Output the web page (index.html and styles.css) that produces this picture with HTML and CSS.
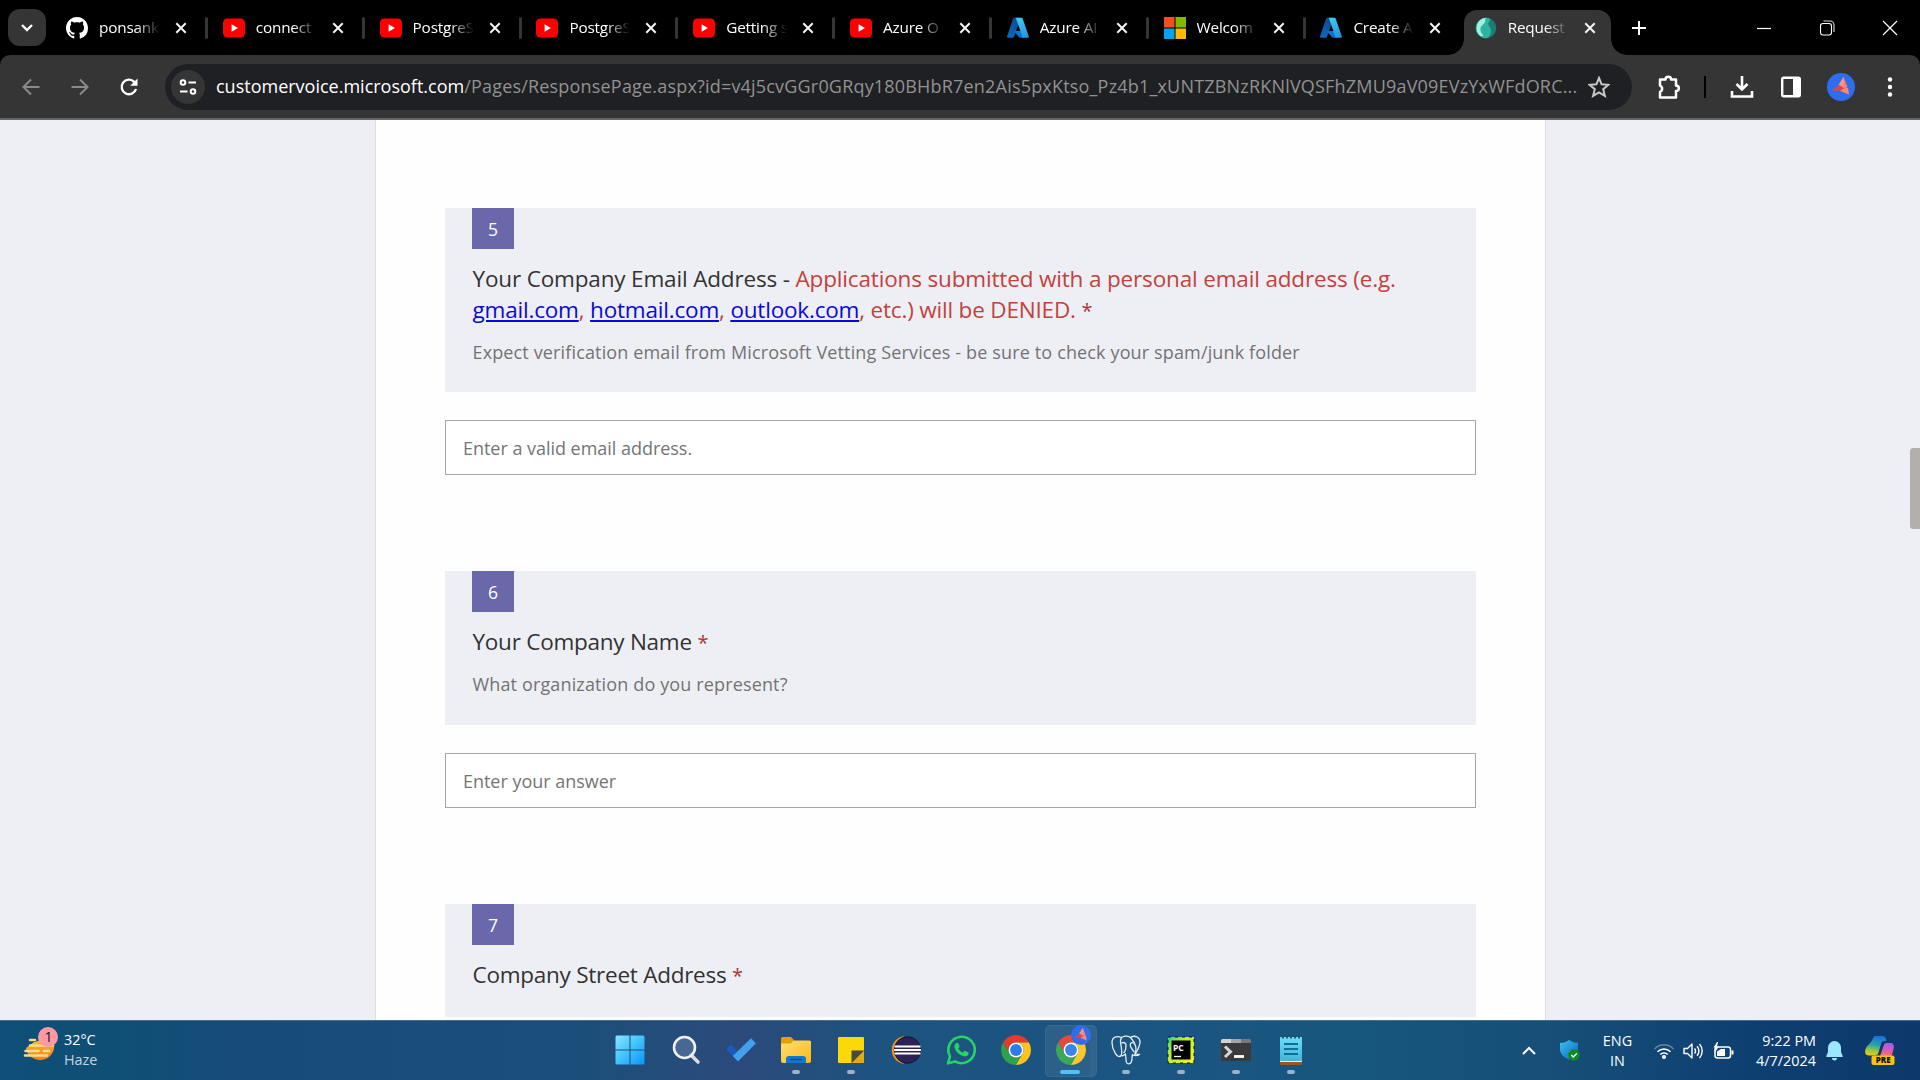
FILE: index.html
```html
<!DOCTYPE html>
<html lang="en">
<head>
<meta charset="utf-8">
<title>Request</title>
<link rel="stylesheet" href="styles.css">
</head>
<body>
<svg class="defs" aria-hidden="true">
  <defs>
    <linearGradient id="azL" x1="0.6" y1="0" x2="0.3" y2="1"><stop offset="0" stop-color="#114a8b"/><stop offset="1" stop-color="#0b67c0"/></linearGradient>
    <linearGradient id="azR" x1="0.3" y1="0" x2="0.7" y2="1"><stop offset="0" stop-color="#3ccbf4"/><stop offset="1" stop-color="#2892df"/></linearGradient>
    <linearGradient id="win" x1="0" y1="0" x2="1" y2="1"><stop offset="0" stop-color="#8fe3ff"/><stop offset="0.5" stop-color="#3ec3fb"/><stop offset="1" stop-color="#0b93fb"/></linearGradient>
    <linearGradient id="folder" x1="0" y1="0" x2="1" y2="1"><stop offset="0" stop-color="#ffdf75"/><stop offset="1" stop-color="#fdb813"/></linearGradient>
    <linearGradient id="sun" x1="0" y1="0" x2="0" y2="1"><stop offset="0" stop-color="#f9c33c"/><stop offset="1" stop-color="#ef7d1a"/></linearGradient>
    <linearGradient id="shield" x1="0" y1="0" x2="1" y2="1"><stop offset="0" stop-color="#3cc4f4"/><stop offset="1" stop-color="#0b5fc0"/></linearGradient>
    <linearGradient id="pyc" x1="0" y1="0" x2="1" y2="1"><stop offset="0" stop-color="#21d789"/><stop offset="0.35" stop-color="#b6f02c"/><stop offset="1" stop-color="#f3f32b"/></linearGradient>
    <linearGradient id="copA" x1="0.5" y1="0" x2="0.3" y2="1"><stop offset="0" stop-color="#1d6fe0"/><stop offset="0.45" stop-color="#25a6a5"/><stop offset="0.75" stop-color="#97c93c"/><stop offset="1" stop-color="#f6c51b"/></linearGradient>
    <linearGradient id="copB" x1="0.6" y1="0" x2="0.4" y2="1"><stop offset="0" stop-color="#a35cf0"/><stop offset="0.6" stop-color="#ee5c9c"/><stop offset="1" stop-color="#fb8a58"/></linearGradient>
    <linearGradient id="note" x1="0" y1="0" x2="0" y2="1"><stop offset="0" stop-color="#6fdcf5"/><stop offset="1" stop-color="#3eb6dc"/></linearGradient>
    <symbol id="yt" viewBox="0 0 22 20"><rect width="22" height="19" y="0.5" rx="4.5" fill="#f00"/><path d="M8.6 6.2v7.6l6.3-3.8z" fill="#fff"/></symbol>
    <symbol id="azure" viewBox="0 0 20 20"><path d="M6.4.6h6L6.3 18.2a1 1 0 0 1-.9.7H1a1 1 0 0 1-.9-1.300L5.500 1.300A1 1 0 0 1 6.400.6z" fill="url(#azL)"/><path d="M14.900 12.800H6l5.200 5.800 4.400.2z" fill="#0a72d0"/><path d="M7.200.6h6a1 1 0 0 1 1 .7l5.600 16.300a1 1 0 0 1-1 1.300h-5.900a1 1 0 0 0 .9-1.300L8.200 1.300A1 1 0 0 0 7.200.6z" fill="url(#azR)"/></symbol>
    <symbol id="x" viewBox="0 0 12 12"><path d="M1.300 1.300l9.400 9.400M10.700 1.300l-9.400 9.400" stroke="#f5f5f5" stroke-width="2" fill="none"/></symbol>
    <symbol id="bird" viewBox="0 0 28 28"><circle cx="14" cy="14" r="14" fill="#2f6df0"/><path d="M16.500 3.800L11.500 12l4 4.500 3.500.5z" fill="#ff9483"/><path d="M16.500 3.800L20.500 14l-3.500 2z" fill="#f97f6e"/><path d="M12.500 12L4.500 17.500l8.500.3 5-2z" fill="#d9484a"/><path d="M13 17.800l9 4-1-7-3.500.5z" fill="#ff8575"/></symbol>
    <symbol id="chrome" viewBox="0 0 48 48"><path d="M24 12h20.780A24 24 0 0 0 3.220 12L13.600 30A12 12 0 0 1 24 12z" fill="#e33b2e"/><path d="M34.390 30L24 48A24 24 0 0 1 3.220 12L13.600 30A12 12 0 0 0 34.390 30z" fill="#2da14c"/><path d="M34.390 30L24 48A24 24 0 0 0 44.780 12H24A12 12 0 0 1 34.390 30z" fill="#fcc31e"/><circle cx="24" cy="24" r="12" fill="#fff"/><circle cx="24" cy="24" r="9.500" fill="#2b7de9"/></symbol>
  </defs>
</svg>

<header class="browser">
  <div class="tabstrip">
    <div class="tab-search"><svg width="14" height="10" viewBox="0 0 14 10"><path d="M2 2l5 5 5-5" fill="none" stroke="#fff" stroke-width="2.400"/></svg></div>
    <div class="tab"><svg class="fav" viewBox="0 0 16 16"><path fill="#fff" d="M8 0C3.580 0 0 3.580 0 8c0 3.540 2.290 6.530 5.470 7.590.4.070.550-.17.550-.38 0-.19-.01-.82-.01-1.490-2.010.370-2.530-.49-2.690-.94-.09-.23-.48-.94-.82-1.130-.28-.15-.68-.52-.01-.53.630-.01 1.080.580 1.230.820.720 1.210 1.870.870 2.330.660.070-.52.280-.87.510-1.070-1.780-.2-3.640-.89-3.640-3.950 0-.87.310-1.590.820-2.150-.08-.2-.36-1.020.080-2.120 0 0 .67-.21 2.200.820.640-.18 1.320-.27 2-.27s1.360.090 2 .27c1.530-1.040 2.200-.82 2.200-.82.440 1.100.160 1.920.080 2.120.510.560.820 1.270.820 2.150 0 3.070-1.870 3.750-3.650 3.950.290.250.540.730.540 1.480 0 1.070-.01 1.930-.01 2.200 0 .21.150.460.550.380A8.010 8.010 0 0 0 16 8c0-4.420-3.580-8-8-8z"/></svg><span class="label">ponsank</span><svg class="close"><use href="#x"/></svg></div>
    <div class="tab"><svg class="fav"><use href="#yt"/></svg><span class="label">connect</span><svg class="close"><use href="#x"/></svg></div>
    <div class="tab"><svg class="fav"><use href="#yt"/></svg><span class="label">PostgreS</span><svg class="close"><use href="#x"/></svg></div>
    <div class="tab"><svg class="fav"><use href="#yt"/></svg><span class="label">PostgreS</span><svg class="close"><use href="#x"/></svg></div>
    <div class="tab"><svg class="fav"><use href="#yt"/></svg><span class="label">Getting s</span><svg class="close"><use href="#x"/></svg></div>
    <div class="tab"><svg class="fav"><use href="#yt"/></svg><span class="label">Azure O</span><svg class="close"><use href="#x"/></svg></div>
    <div class="tab"><svg class="fav"><use href="#azure"/></svg><span class="label">Azure AI</span><svg class="close"><use href="#x"/></svg></div>
    <div class="tab"><svg class="fav" viewBox="0 0 22 22"><path fill="#f25022" d="M0 0h10.500v10.500H0z"/><path fill="#7fba00" d="M11.500 0H22v10.500H11.500z"/><path fill="#00a4ef" d="M0 11.500h10.500V22H0z"/><path fill="#ffb900" d="M11.500 11.500H22V22H11.500z"/></svg><span class="label">Welcom</span><svg class="close"><use href="#x"/></svg></div>
    <div class="tab plain"><svg class="fav"><use href="#azure"/></svg><span class="label">Create A</span><svg class="close"><use href="#x"/></svg></div>
    <div class="tab active"><svg class="fav" viewBox="0 0 22 22"><circle cx="11" cy="11" r="10.300" fill="#1d7d71"/><path d="M11 .7c3.500 0 4.500 1.300 4 2.300-1 2-2.500 3.500-1 6 1.500 2.200 3 4.500 1.500 8-1 2.500-3 4.300-4.500 4.300A10.300 10.300 0 0 1 11 .7z" fill="#2fb3a1"/><path d="M11 .7C9.500 3 11 4 9.500 6S5 9 5.500 13c.3 2.500 1.500 4 3 5.500-1 .8-2 .8-3 .5A10.300 10.300 0 0 1 11 .7z" fill="#a5efdf"/></svg><span class="label">Request</span><svg class="close"><use href="#x"/></svg></div>
    <svg class="newtab" viewBox="0 0 16 16"><path d="M8 1v14M1 8h14" stroke="#fff" stroke-width="2"/></svg>
    <div class="wincontrols">
      <svg width="16" height="16" viewBox="0 0 16 16"><path d="M1 8.500h14" stroke="#fff" stroke-width="1.200"/></svg>
      <svg width="16" height="16" viewBox="0 0 16 16"><rect x="1.500" y="3.500" width="11" height="11.500" rx="2.500" fill="none" stroke="#fff" stroke-width="1.100"/><path d="M4.500 1h6.500a4 4 0 0 1 4 4v7" fill="none" stroke="#ddd" stroke-width="1.100"/></svg>
      <svg width="16" height="16" viewBox="0 0 16 16"><path d="M1 1l14 14M15 1L1 15" stroke="#fff" stroke-width="1.200"/></svg>
    </div>
  </div>
  <div class="toolbar">
    <div class="nav">
      <svg width="20" height="20" viewBox="0 0 20 20"><path d="M18.500 10H3M10 2.500L2.500 10l7.500 7.500" fill="none" stroke="#8a8a8a" stroke-width="2"/></svg>
      <svg width="20" height="20" viewBox="0 0 20 20"><path d="M1.500 10H17M10 2.500l7.500 7.500-7.500 7.500" fill="none" stroke="#8a8a8a" stroke-width="2"/></svg>
      <svg width="20" height="20" viewBox="0 0 20 20"><path d="M17 12a7.300 7.300 0 1 1-1.800-7.200L17.500 7" fill="none" stroke="#fff" stroke-width="2.400"/><path d="M18.500 1.500v7.300h-7.300z" fill="#fff"/></svg>
    </div>
    <div class="omnibox">
      <div class="siteinfo"><svg width="20" height="20" viewBox="0 0 20 20" fill="none" stroke="#fff" stroke-width="2"><circle cx="5" cy="5.500" r="2.300"/><path d="M10.500 5.500H18M2 14.500h7.500"/><circle cx="15" cy="14.500" r="2.300"/></svg></div>
      <span class="url"><span class="domain">customervoice.microsoft.com</span><span class="path">/Pages/ResponsePage.aspx?id=v4j5cvGGr0GRqy180BHbR7en2Ais5pxKtso_Pz4b1_xUNTZBNzRKNlVQSFhZMU9aV09EVzYxWFdORC...</span></span>
      <svg class="star" viewBox="0 0 22 22"><path d="M11 2l2.600 6.300 6.900.5-5.300 4.400 1.700 6.700L11 16.300l-5.900 3.600 1.700-6.700L1.500 8.800l6.900-.5z" fill="none" stroke="#c8c8c8" stroke-width="2"/></svg>
    </div>
    <div class="actions">
      <svg class="ext" width="26" height="28" viewBox="0 0 26 28"><path d="M4 6.500h5.500a2.800 2.800 0 0 1 5.600 0h4.900v6a2.800 2.800 0 0 1 0 5.600v6.400H4v-5.600a3.400 3.400 0 0 0 0-6.300z" fill="none" stroke="#fff" stroke-width="2.500" stroke-linejoin="round"/></svg>
      <i class="divider"></i>
      <svg class="download" width="24" height="24" viewBox="0 0 24 24"><path d="M12 1v13M6.500 9l5.500 5.500L17.500 9M2 16v5.500h20V16" fill="none" stroke="#fff" stroke-width="2.600"/></svg>
      <svg class="panel" width="20" height="22" viewBox="0 0 20 22"><rect x="1.200" y="1.700" width="17.600" height="18.600" rx="1.500" fill="none" stroke="#fff" stroke-width="2.400"/><path d="M12 1.700h6.800v18.600H12z" fill="#fff"/></svg>
      <svg class="avatar" width="28" height="28"><use href="#bird"/></svg>
      <svg width="6" height="22" viewBox="0 0 6 22" fill="#fff"><circle cx="3" cy="3.500" r="2.200"/><circle cx="3" cy="11" r="2.200"/><circle cx="3" cy="18.500" r="2.200"/></svg>
    </div>
  </div>
</header>

<main class="viewport">
  <section class="form">
    <div class="question">
      <div class="card">
        <span class="num">5</span>
        <h2 class="title long"><span class="first">Your Company Email Address - <span class="warn">Applications submitted with a personal email address (e.g.</span></span><br><span class="warn"><a href="#">gmail.com</a>, <a href="#">hotmail.com</a>, <a href="#">outlook.com</a>, etc.) will be DENIED.</span> <span class="req">*</span></h2>
        <p class="sub">Expect verification email from Microsoft Vetting Services - be sure to check your spam/junk folder</p>
      </div>
      <input class="answer" type="text" placeholder="Enter a valid email address.">
    </div>
    <div class="question">
      <div class="card medium">
        <span class="num">6</span>
        <h2 class="title">Your Company Name <span class="req">*</span></h2>
        <p class="sub">What organization do you represent?</p>
      </div>
      <input class="answer" type="text" placeholder="Enter your answer">
    </div>
    <div class="question">
      <div class="card">
        <span class="num">7</span>
        <h2 class="title">Company Street Address <span class="req">*</span></h2>
      </div>
    </div>
  </section>
  <i class="thumb"></i>
</main>

<footer class="taskbar">
  <div class="weather">
    <svg width="36" height="38" viewBox="0 0 36 38"><path d="M3 21a14 14 0 0 0 28-4l-4-6-16 4z" fill="url(#sun)"/><path d="M7 13h5M7 18.500h23M2.500 24h13M21 24h5M2 28.500h22" stroke="#f7dc8b" stroke-width="2.600" stroke-linecap="round"/><circle cx="25" cy="10" r="10" fill="#ff99a4"/><text x="25.500" y="15" class="badge">1</text></svg>
    <div class="wtext"><span>32°C</span><span class="dim">Haze</span></div>
  </div>
  <div class="apps">
    <div class="app start"><svg width="30" height="30" viewBox="0 0 30 30"><path d="M2 .5h12.500v14H.5V2A1.500 1.500 0 0 1 2 .5zM15.500.5H28A1.500 1.500 0 0 1 29.500 2v12.500h-14zM.5 15.500h14v14H2A1.500 1.500 0 0 1 .5 28zM15.500 15.500h14V28a1.500 1.500 0 0 1-1.500 1.500H15.500z" fill="url(#win)"/></svg></div>
    <div class="app"><svg width="30" height="30" viewBox="0 0 30 30"><path d="M20 20l7 7" stroke="#d8dadd" stroke-width="3.600" stroke-linecap="round"/><circle cx="13.500" cy="12.500" r="10.500" fill="#5f7ca3" fill-opacity=".6" stroke="#f0f0f0" stroke-width="2.600"/></svg></div>
    <div class="app"><svg width="30" height="30" viewBox="0 0 30 30"><path d="M0 14.500L4.800 9.500l6.500 6.500-4.600 5z" fill="#195abf"/><path d="M6.700 21L25 3.200l5 5L12 26.500z" fill="#42a0ee"/></svg></div>
    <div class="app run"><svg width="30" height="30" viewBox="0 0 30 30"><path d="M0 3.500A1.500 1.500 0 0 1 1.500 2H10l3 3v6H0z" fill="#e0a106"/><path d="M0 8.500h9.500L13 5.500h15.500A1.500 1.500 0 0 1 30 7v19a2 2 0 0 1-2 2H2a2 2 0 0 1-2-2z" fill="url(#folder)"/><path d="M5 28v-4a3 3 0 0 1 3-3h14a3 3 0 0 1 3 3v4z" fill="#0f78d0"/><path d="M9 24.500h12" stroke="#0a4a94" stroke-width="1.300"/></svg></div>
    <div class="app run"><svg width="30" height="30" viewBox="0 0 30 30"><rect x="2" y="2" width="26" height="26" rx="1" fill="#fbd808"/><path d="M15.500 15.500H28V16L16 28h-.5z" fill="#4a4a45"/><path d="M28 16v12H16z" fill="#e6a914"/></svg></div>
    <div class="app"><svg width="32" height="30" viewBox="0 0 32 30"><path d="M14 1.200A13.900 13.900 0 0 0 14 28.800L9 15z" fill="#f7941e"/><circle cx="17.500" cy="15" r="13.300" fill="#2b2255" stroke="#191530"/><path d="M4.500 11.500h26M4 15h27M4.500 18.500h26" stroke="#fff" stroke-width="2"/></svg></div>
    <div class="app"><svg width="30" height="30" viewBox="0 0 30 30"><path d="M2 28.300l2-7A13.200 13.200 0 1 1 9 26.400z" fill="none" stroke="#25d366" stroke-width="2.600" stroke-linejoin="round"/><path d="M10.300 8c.6-.5 1.700-.5 2 .2l1.200 2.700c.2.500 0 1-.3 1.400l-.9 1.100c1.100 2 2.500 3.200 4.500 4.200l1.300-1.400c.3-.4.7-.5 1.200-.3l2.700 1.300c.8.4.7 1.200.4 2-.7 1.700-2.800 2.600-4.700 2.100-4.500-1.200-7.500-4.200-9-8C8 11.300 8.700 9.200 10.300 8z" fill="#25d366"/></svg></div>
    <div class="app"><svg width="30" height="30"><use href="#chrome"/></svg></div>
    <div class="app current"><svg width="30" height="30"><use href="#chrome"/></svg><svg class="overlay"><use href="#bird"/></svg></div>
    <div class="app run"><svg width="30" height="30" viewBox="0 0 30 30" fill="none" stroke="#e5edf4" stroke-width="1.300" stroke-linejoin="round"><path d="M10 20.500C6.500 25 1 14 1 7.500 1 2 6 .5 10.500 2.500 13 1 17 1 19.500 2.500 24-.5 29.500 2.500 29 7.500c-.5 4.500-3 9-5.500 12.500"/><path d="M10 20.500c1.500-2 .5-4 .5-6.500C10.500 10 8 6.500 10.500 2.500M10 20.500c1.500 1 3-.2 4.500-1.500l.8 8c.4 2.500 4 2.500 5 0 .8-2 .7-5 1.200-7.500 1 1.500 5 1.500 7 0-2 0-4.500 0-4.500-1.500 2-3 1.500-9-4.500-15.500"/><path d="M10.500 8c2.500-1.200 4.500 0 4.500 2 0 3 0 6-2.500 8M23 8c-2-.8-3.800 0-3.800 2s2 4.500 4 7"/></svg></div>
    <div class="app run"><svg width="30" height="30" viewBox="0 0 30 30"><rect x="2" y="2" width="26" height="26" fill="url(#pyc)"/><rect x="2" y="2" width="26" height="26" fill="none" stroke="#111" stroke-dasharray="3 4"/><rect x="5.500" y="5.500" width="19" height="19" fill="#000"/><text x="7" y="15.500" class="pc">PC</text><path d="M8 21.500h7" stroke="#fff" stroke-width="1.300"/></svg></div>
    <div class="app run"><svg width="30" height="30" viewBox="0 0 30 30"><rect y="4" width="30" height="22" rx="1.500" fill="#3a3a3c"/><path d="M0 8V5.500A1.500 1.500 0 0 1 1.500 4H20v4z" fill="#d2d2d2"/><path d="M10 4h10v4H10z" fill="#a5a5a5"/><path d="M20 4h8.500A1.500 1.500 0 0 1 30 5.500V8H20z" fill="#777"/><path d="M4 11.500l5.500 5.300L4 22" fill="none" stroke="#d5d5d5" stroke-width="3"/><path d="M13 21.500h10" stroke="#fff" stroke-width="2.800"/></svg></div>
    <div class="app run"><svg width="30" height="30" viewBox="0 0 30 30"><rect x="4" y="27" width="22" height="3" rx="1" fill="#a4541a"/><path d="M4 24h22v3H4z" fill="#eee"/><rect x="4" y="2" width="22" height="24" rx="1" fill="url(#note)"/><path d="M8 9h14M8 14h14M8 19h14" stroke="#0e6e94" stroke-width="1.800"/><path d="M7 .5v3M11 .5v3M15 .5v3M19 .5v3M23 .5v3" stroke="#14546d" stroke-width="1.800"/></svg></div>
  </div>
  <div class="tray">
    <svg class="chev" viewBox="0 0 14 9"><path d="M1 8l6-6 6 6" fill="none" stroke="#fff" stroke-width="2"/></svg>
    <svg class="shield" viewBox="0 0 20 21"><path d="M9 0c3 2 6 2.800 9 2.800V9c0 5-4 8.500-9 10.500C4 17.500 0 14 0 9V2.800C3.500 2.800 6.500 2 9 0z" fill="url(#shield)"/><circle cx="14" cy="15" r="5.800" fill="#0f8a1f"/><path d="M11.300 15l2 2 3.500-3.500" fill="none" stroke="#fff" stroke-width="1.300"/></svg>
    <div class="lang"><span>ENG</span><span>IN</span></div>
    <div class="status">
      <svg width="20" height="16" viewBox="0 0 20 16" fill="none" stroke="#fff" stroke-width="1.500"><path d="M.5 6a13 13 0 0 1 19 0" stroke="#5f87a8"/><path d="M3.500 8.800a9 9 0 0 1 13 0M6.300 11.500a5.200 5.200 0 0 1 7.400 0"/><circle cx="10" cy="14" r="1.300" fill="#fff"/></svg>
      <svg width="21" height="18" viewBox="0 0 21 18" fill="none" stroke="#fff" stroke-width="1.400"><path d="M1 6.500v5h3.500l4.500 4.500V2L4.500 6.500z" stroke-linejoin="round"/><path d="M11.500 6.500a3.500 3.500 0 0 1 0 5M14 4.200a7 7 0 0 1 0 9.600M16.500 2a10.500 10.500 0 0 1 0 14"/></svg>
      <svg width="21" height="18" viewBox="0 0 21 18"><rect x="2" y="5" width="15.500" height="11" rx="2.500" fill="none" stroke="#fff" stroke-width="1.500"/><path d="M18.500 8.500h2v4h-2zM4 14V9.500L8 7h4v7z" fill="#fff"/><path d="M4 0L.5 5.500h2L1.500 11 6 4.500H4L5 0z" fill="#fff"/></svg>
    </div>
    <div class="clock"><span>9:22 PM</span><span>4/7/2024</span></div>
    <svg class="bell" viewBox="0 0 17 20"><path d="M8.500 0a6.500 6.500 0 0 1 6.500 6.500V11l1.700 4v1H.3v-1L2 11V6.500A6.500 6.500 0 0 1 8.500 0zM6 17h5a2.500 2.500 0 0 1-5 0z" fill="#9be7ff"/></svg>
    <svg class="copilot" viewBox="0 0 30 29"><path d="M8 2.500C8.700.8 9.500 0 11.500 0h6c2 0 3 1 3.500 3l.5 2h-2c-2 0-3 1-3.500 3l-2.500 8.500c-.7 2-1.500 3-3.500 3H4c-3 0-4.500-2-3.700-5.500C1.800 9 5.500 8 8 2.500z" fill="url(#copA)"/><path d="M22 7h3c3 0 4.500 2 3.700 5.500L27 18.500c-.7 2.500-2 4-4 4H12c2.500-.5 3-2 3.700-4L18.500 10c.5-2 1.500-3 3.500-3z" fill="url(#copB)"/><rect x="6.500" y="19.500" width="23" height="9.500" rx="2" fill="#fcc20a"/><text x="18.200" y="27.200" class="pre">PRE</text></svg>
  </div>
</footer>
</body>
</html>
```
FILE: styles.css
```css
* { box-sizing: border-box; }
body { margin: 0; width: 1920px; height: 1080px; overflow: hidden; display: flex; flex-direction: column; font-family: "Open Sans", sans-serif; background: #000; }
svg { display: block; flex: none; }
.defs { position: absolute; width: 0; height: 0; }

/* Browser frame */
.browser { flex: none; height: 120px; background: #000; }
.tabstrip { height: 55px; display: flex; align-items: center; padding-left: 8px; }
.tab-search { flex: none; width: 38px; height: 37px; border-radius: 12px; background: #353535; display: flex; align-items: center; justify-content: center; margin-right: 6px; }
.tab { flex: none; width: 156.800px; height: 45px; padding-left: 14px; display: flex; align-items: center; }
.tab:not(.plain):not(.active)::after { content: ""; width: 3px; height: 22px; border-radius: 2px; background: #353535; margin-left: 18px; }
.fav { width: 22px; height: 22px; margin-right: 11px; }
.label { width: 61px; margin-right: 15px; padding-bottom: 2px; overflow: hidden; white-space: nowrap; color: #fff; font-size: 15.300px; letter-spacing: -0.180px; line-height: 24px; -webkit-mask-image: linear-gradient(90deg, #000 60%, transparent 100%); mask-image: linear-gradient(90deg, #000 60%, transparent 100%); }
.close { width: 12px; height: 12px; }
.tab.active { position: relative; align-self: flex-end; width: 146.500px; padding: 0 0 9px 10.500px; margin-left: 1px; background: #353535; border-radius: 13px 13px 0 0; }
.tab.active::before, .tab.active::after { content: ""; position: absolute; bottom: 0; width: 16px; height: 16px; }
.tab.active::before { left: -16px; background: radial-gradient(circle at 0 0, transparent 15.500px, #353535 16px); }
.tab.active::after { right: -16px; background: radial-gradient(circle at 100% 0, transparent 15.500px, #353535 16px); }
.newtab { width: 16px; height: 16px; margin-left: 20px; }
.wincontrols { margin-left: auto; margin-right: 22px; display: flex; gap: 47px; }
.toolbar { height: 65px; background: #353535; border-bottom: 2px solid #686667; border-radius: 10px 10px 0 0; display: flex; align-items: center; }
.nav { display: flex; gap: 29px; padding-left: 21px; width: 165px; }
.omnibox { width: 1467px; height: 46px; border-radius: 23px; background: #1f2023; display: flex; align-items: center; padding: 0 22px 0 6px; }
.siteinfo { width: 34px; height: 34px; border-radius: 50%; background: #353535; display: flex; align-items: center; justify-content: center; margin-right: 11px; flex: none; }
.url { flex: 1; padding-bottom: 2px; white-space: nowrap; font-size: 18px; line-height: 26px; color: #929292; }
.domain { color: #fff; }
.path { letter-spacing: 0.190px; }
.star { width: 22px; height: 22px; }
.actions { flex: 1; display: flex; align-items: center; padding-left: 24px; }
.ext { margin-right: 22px; }
.divider { width: 2px; height: 22px; background: #000; margin-right: 24px; }
.download { margin-right: 27px; }
.panel { margin-right: 26px; }
.avatar { margin-right: 32px; }

/* Page */
.viewport { position: relative; flex: none; height: 900px; overflow: hidden; background: #eeeff5; }
.form { width: 1171px; height: 1100px; margin-left: 375px; padding: 88px 69px 0; background: #fefefe; border: solid #dddde5; border-width: 0 1px; }
.question { margin-bottom: 96px; }
.card { background: #eeeff5; padding: 0 27px 27px; }
.medium { min-height: 154px; }
.num { display: block; width: 42px; height: 41px; line-height: 42px; text-align: center; color: #fff; background: #6868aa; font-size: 17.500px; }
.title { margin: 14px 0 0; padding-left: 0.500px; font-weight: 400; font-size: 22.500px; line-height: 31px; letter-spacing: -0.250px; color: #333; white-space: nowrap; }
.title.long { letter-spacing: -0.190px; }
.first { letter-spacing: -0.160px; }
.warn { color: #c4413c; }
.warn a { color: #0a09d8; text-decoration: underline; text-decoration-thickness: 2px; text-underline-offset: 2px; }
.req { color: #ae3335; font-size: 20px; line-height: 0; }
.sub { margin: 15px 0 0; padding-left: 0.500px; font-size: 18px; line-height: 25px; letter-spacing: 0.140px; color: #737373; white-space: nowrap; }
.answer { display: block; width: 100%; height: 55px; margin-top: 28px; padding: 0 17px; border: 1px solid #a6a6a6; background: #fff; font: 18px "Open Sans", sans-serif; letter-spacing: -0.030px; outline: 0; }
.answer::placeholder { color: #757575; opacity: 1; }
.thumb { position: absolute; right: 0; top: 328px; width: 10px; height: 81px; border-radius: 3px 0 0 3px; background: #b2afad; }

/* Taskbar */
.taskbar { flex: none; height: 60px; display: flex; align-items: stretch; border-top: 1px solid #456c88; color: #fff; font-size: 14.400px; line-height: 20px; background: linear-gradient(90deg, #0f4f78 0, #0f4f75 110px, #174b7a 260px, #1c4f7b 580px, #2b4a7b 740px, #1d537f 880px, #1b5582 1150px, #17567d 1350px, #164f78 1550px, #0e3f71 1750px, #0d386b 1920px); }
.weather { width: 603px; padding: 6px 0 0 23px; display: flex; gap: 5px; }
.wtext, .lang, .clock { display: flex; flex-direction: column; }
.wtext { padding-top: 3px; }
.dim { color: #c3d3de; }
.badge { font-size: 14px; fill: #111; text-anchor: middle; }
.apps { display: flex; }
.app { position: relative; width: 55px; padding-top: 14px; display: flex; justify-content: center; align-items: flex-start; }
.app.start { padding-right: 2px; }
.run::after, .current::after { content: ""; position: absolute; bottom: 6px; left: 24px; width: 8px; height: 4px; border-radius: 2px; background: #9db3c5; }
.current::before { content: ""; position: absolute; left: 2px; top: 4px; width: 50px; height: 50px; border-radius: 5px; background: rgba(255,255,255,.07); border: 1px solid rgba(255,255,255,.06); box-shadow: inset -6px 0 rgba(255,255,255,.03); }
.current::after { left: 17px; width: 20px; background: #4cc2ff; }
.overlay { position: absolute; width: 20px; height: 20px; left: 28px; top: 4px; }
.pc { font: 700 8.500px "Open Sans", sans-serif; fill: #fff; }
.tray { flex: 1; display: flex; align-items: center; justify-content: flex-end; padding-right: 25px; }
.chev { width: 14px; height: 9px; margin-right: 24px; }
.shield { width: 20px; height: 21px; margin-right: 23px; }
.lang { align-items: center; width: 29px; margin-right: 22px; }
.status { display: flex; align-items: center; gap: 9px; margin-right: 21px; }
.clock { align-items: flex-end; margin-right: 10px; width: 61px; white-space: nowrap; }
.bell { width: 17px; height: 20px; margin-right: 22px; }
.copilot { width: 30px; height: 29px; }
.pre { font: 800 8px "Open Sans", sans-serif; fill: #111; text-anchor: middle; }
```
